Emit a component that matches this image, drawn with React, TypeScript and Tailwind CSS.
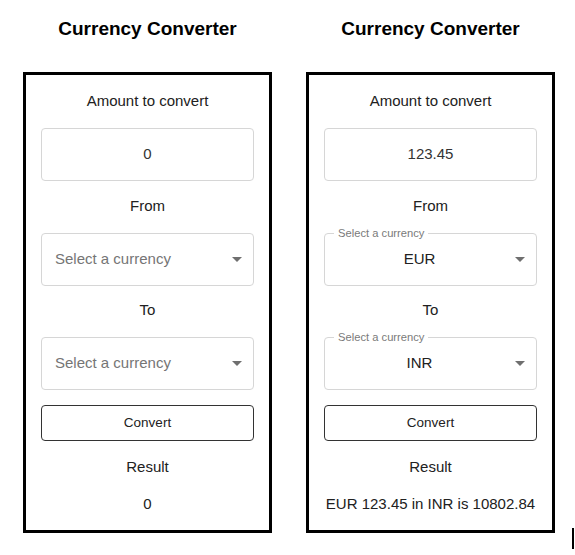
import React from "react";

type SelectProps = {
  value?: string;
};

function CurrencySelect({ value }: SelectProps) {
  return (
    <div className="relative mt-[18px] flex h-[53px] w-full items-center rounded-[4px] border border-[#d6d6d6] pl-[13px] pr-[11px]">
      {value && (
        <span className="absolute -top-[8px] left-[9px] bg-white px-[4px] text-[11.2px] leading-[14px] text-[#7a7a7a]">
          Select a currency
        </span>
      )}
      {value ? (
        <span className="flex-1 pr-[14px] text-center text-[15px] text-[#212121]">
          {value}
        </span>
      ) : (
        <span className="flex-1 text-[15px] text-[#757575]">
          Select a currency
        </span>
      )}
      <Arrow />
    </div>
  );
}

function Arrow() {
  return (
    <svg width="10" height="5" viewBox="0 0 10 5" className="shrink-0">
      <path d="M0 0 L10 0 L5 5 Z" fill="#6f6f6f" />
    </svg>
  );
}

type PanelProps = {
  amount: string;
  from?: string;
  to?: string;
  result: string;
};

function Converter({ amount, from, to, result }: PanelProps) {
  return (
    <div className="flex w-[249px] shrink-0 flex-col">
      <h1 className="pt-[18px] text-center text-[19px] font-bold leading-[22px] text-black">
        Currency Converter
      </h1>

      <div className="mt-[32px] flex h-[461px] flex-col items-center border-[3px] border-black px-[15px] pt-[17px] text-[#212121]">
        <p className="text-[15px] leading-[18px]">Amount to convert</p>

        <div className="mt-[18px] flex h-[53px] w-full items-center justify-center rounded-[4px] border border-[#d6d6d6] text-[15px] text-[#333]">
          {amount}
        </div>

        <p className="mt-[16px] text-[15px] leading-[18px]">From</p>
        <CurrencySelect value={from} />

        <p className="mt-[15px] text-[15px] leading-[18px]">To</p>
        <CurrencySelect value={to} />

        <button className="mt-[15px] h-[36px] w-full rounded-[4px] border border-[#333] text-[13.5px] text-[#222]">
          Convert
        </button>

        <p className="mt-[17px] text-[15px] leading-[18px]">Result</p>
        <p className="mt-[19px] text-[15px] leading-[18px]">{result}</p>
      </div>
    </div>
  );
}

export default function App() {
  return (
    <div className="flex h-[555px] w-[575px] items-start bg-white pl-[23px] font-['Liberation_Sans',Arial,sans-serif]">
      <Converter amount="0" result="0" />

      <div className="ml-[34px]">
        <Converter
          amount="123.45"
          from="EUR"
          to="INR"
          result="EUR 123.45 in INR is 10802.84"
        />
      </div>

      {/* stray text cursor */}
      <div className="ml-[17px] mt-[528px] h-[21px] w-[2px] bg-black" />
    </div>
  );
}
